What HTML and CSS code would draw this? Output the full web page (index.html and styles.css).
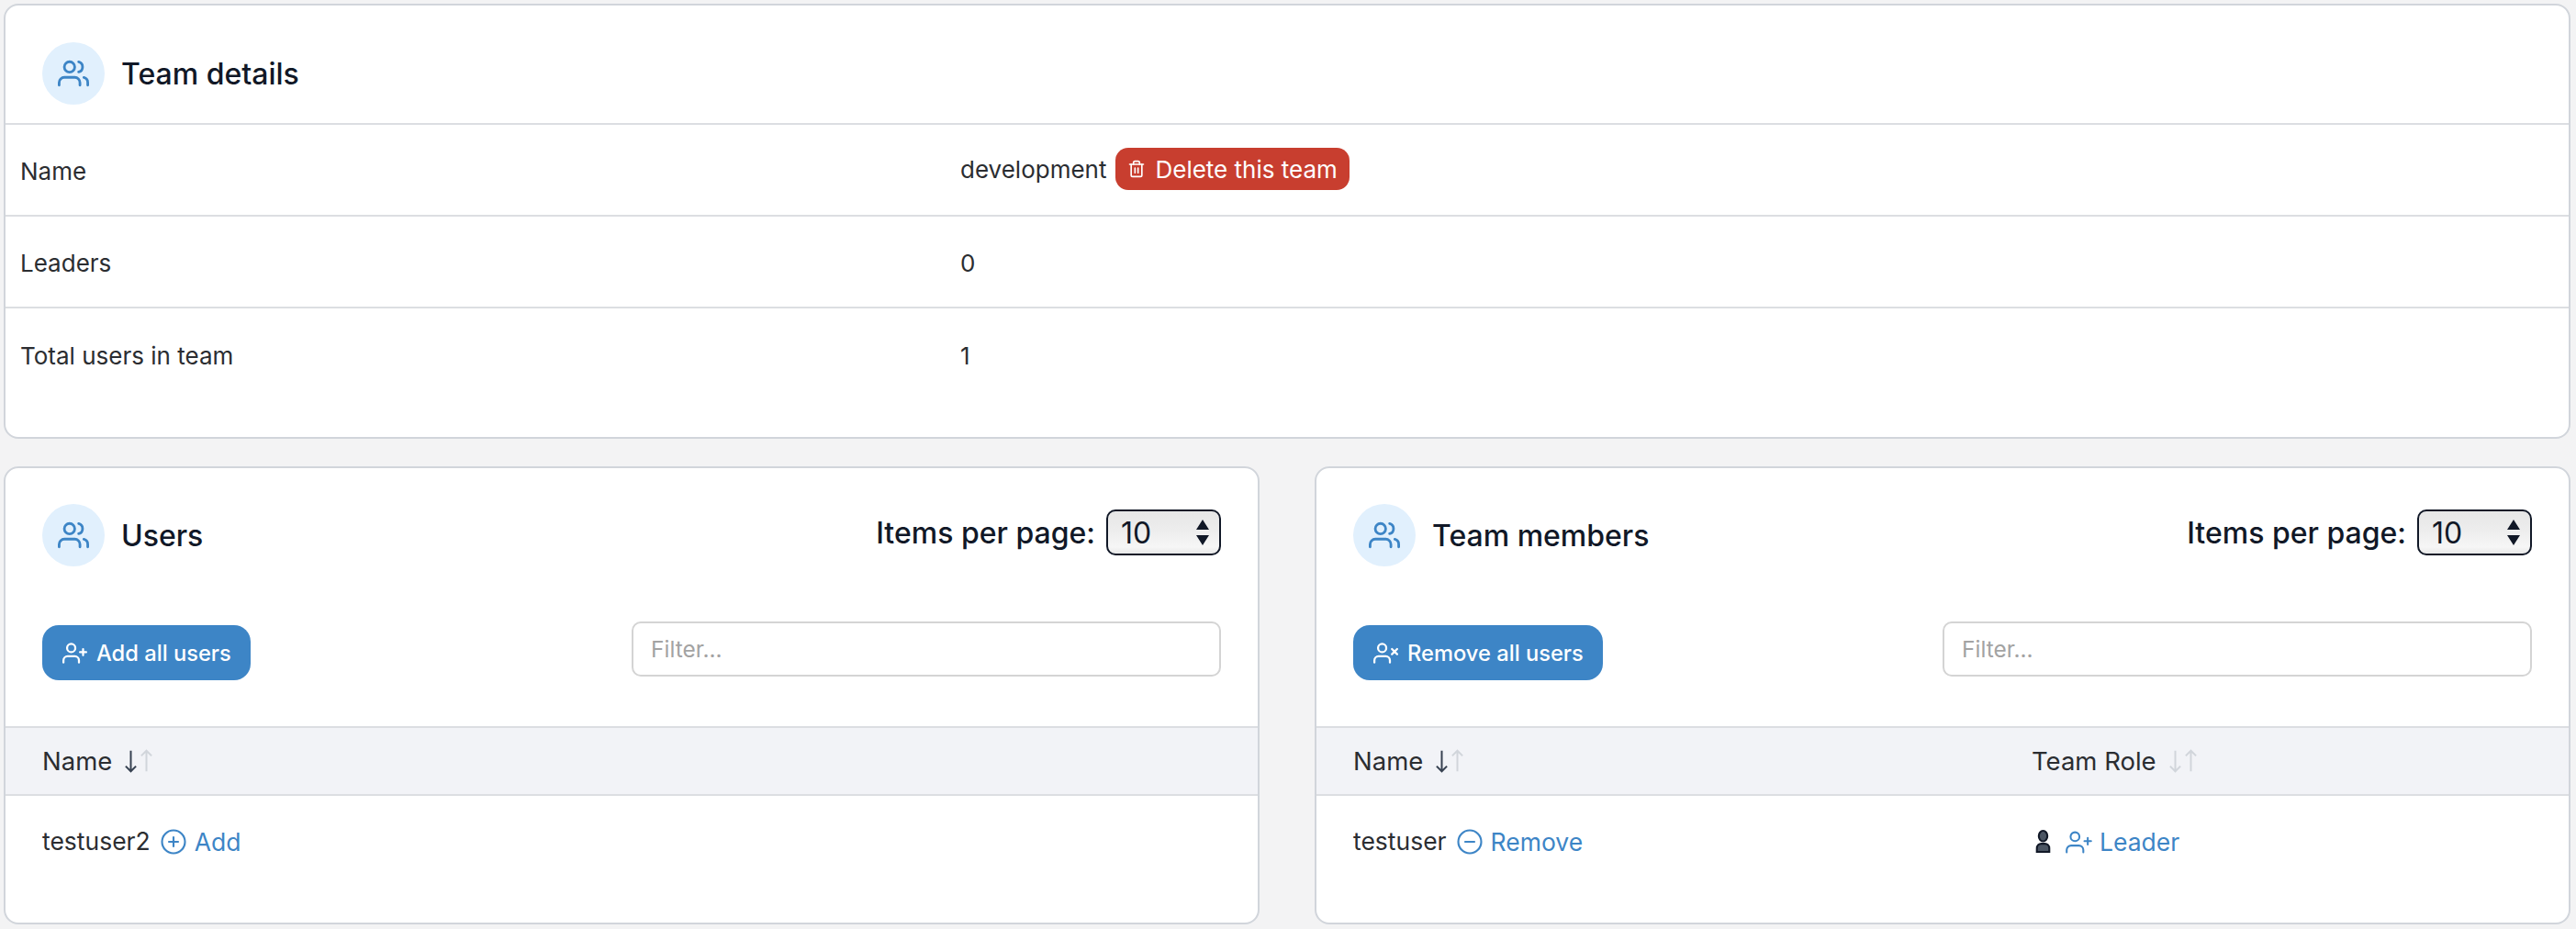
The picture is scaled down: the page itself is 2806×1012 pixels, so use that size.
FILE: index.html
```html
<!DOCTYPE html>
<html lang="en">
<head>
<meta charset="UTF-8">
<title>Team details</title>
<link rel="stylesheet" href="styles.css">
</head>
<body>
<svg class="sprite" xmlns="http://www.w3.org/2000/svg">
  <symbol id="i-users" viewBox="0 0 24 24"><path d="M17 21v-2a4 4 0 0 0-4-4H5a4 4 0 0 0-4 4v2"/><circle cx="9" cy="7" r="4"/><path d="M23 21v-2a4 4 0 0 0-3-3.87"/><path d="M16 3.13a4 4 0 0 1 0 7.75"/></symbol>
  <symbol id="i-user-plus" viewBox="0 0 24 24"><path d="M16 21v-2a4 4 0 0 0-4-4H5a4 4 0 0 0-4 4v2"/><circle cx="8.5" cy="7" r="4"/><path d="M20 8v6M23 11h-6"/></symbol>
  <symbol id="i-user-x" viewBox="0 0 24 24"><path d="M16 21v-2a4 4 0 0 0-4-4H5a4 4 0 0 0-4 4v2"/><circle cx="8.5" cy="7" r="4"/><path d="M18 8l5 5M23 8l-5 5"/></symbol>
  <symbol id="i-trash" viewBox="0 0 24 24"><path d="M3 6h18"/><path d="M19 6v14a2 2 0 0 1-2 2H7a2 2 0 0 1-2-2V6m3 0V4a2 2 0 0 1 2-2h4a2 2 0 0 1 2 2v2"/><path d="M10 11v6M14 11v6"/></symbol>
  <symbol id="i-plus" viewBox="0 0 24 24"><circle cx="12" cy="12" r="10"/><path d="M12 8v8M8 12h8"/></symbol>
  <symbol id="i-minus" viewBox="0 0 24 24"><circle cx="12" cy="12" r="10"/><path d="M8 12h8"/></symbol>
  <symbol id="i-down" viewBox="0 0 12 24"><path d="M6 3v18M1.5 16.500L6 21l4.500-4.500"/></symbol>
  <symbol id="i-up" viewBox="0 0 12 24"><path d="M6 21V3M1.500 7.500L6 3l4.500 4.500"/></symbol>
</svg>

<section class="card card-details">
  <header class="card-head-line">
    <span class="badge"><svg class="icon icon-badge"><use href="#i-users"/></svg></span>
    <h2 class="card-title">Team details</h2>
  </header>
  <div class="detail-row">
    <div>Name</div>
    <div class="detail-value">
      <span class="team-name">development</span>
      <a class="btn-delete"><svg class="icon icon-trash"><use href="#i-trash"/></svg>Delete this team</a>
    </div>
  </div>
  <div class="detail-row">
    <div>Leaders</div>
    <div>0</div>
  </div>
  <div class="detail-row detail-row-last">
    <div>Total users in team</div>
    <div>1</div>
  </div>
</section>

<div class="panels">
  <section class="card">
    <header class="card-head">
      <span class="badge"><svg class="icon icon-badge"><use href="#i-users"/></svg></span>
      <h2 class="card-title">Users</h2>
      <div class="per-page">
        <span>Items per page:</span>
        <div class="select-wrap">
          <select class="select"><option>10</option></select>
          <svg class="select-arrows" viewBox="0 0 14 28"><path d="M7 0l7 11H0zM7 28L0 17h14z"/></svg>
        </div>
      </div>
    </header>
    <div class="toolbar">
      <a class="btn-primary"><svg class="icon icon-btn"><use href="#i-user-plus"/></svg>Add all users</a>
      <input class="filter" type="text" placeholder="Filter...">
    </div>
    <div class="thead">
      <div class="th">Name <span class="sort"><svg class="arrow arrow-on"><use href="#i-down"/></svg><svg class="arrow"><use href="#i-up"/></svg></span></div>
    </div>
    <div class="tr">
      <div class="td">
        <span>testuser2</span>
        <a class="link"><svg class="icon icon-link"><use href="#i-plus"/></svg>Add</a>
      </div>
    </div>
  </section>

  <section class="card">
    <header class="card-head">
      <span class="badge"><svg class="icon icon-badge"><use href="#i-users"/></svg></span>
      <h2 class="card-title">Team members</h2>
      <div class="per-page">
        <span>Items per page:</span>
        <div class="select-wrap">
          <select class="select"><option>10</option></select>
          <svg class="select-arrows" viewBox="0 0 14 28"><path d="M7 0l7 11H0zM7 28L0 17h14z"/></svg>
        </div>
      </div>
    </header>
    <div class="toolbar">
      <a class="btn-primary"><svg class="icon icon-btn"><use href="#i-user-x"/></svg>Remove all users</a>
      <input class="filter" type="text" placeholder="Filter...">
    </div>
    <div class="thead thead-two">
      <div class="th">Name <span class="sort"><svg class="arrow arrow-on"><use href="#i-down"/></svg><svg class="arrow"><use href="#i-up"/></svg></span></div>
      <div class="th">Team Role <span class="sort"><svg class="arrow"><use href="#i-down"/></svg><svg class="arrow"><use href="#i-up"/></svg></span></div>
    </div>
    <div class="tr tr-two">
      <div class="td">
        <span>testuser</span>
        <a class="link"><svg class="icon icon-link"><use href="#i-minus"/></svg>Remove</a>
      </div>
      <div class="td">
        <svg class="icon-role" viewBox="0 0 16 24"><ellipse cx="8" cy="6.500" rx="4.500" ry="5.500"/><path d="M1.500 23v-3.500C1.500 16 4 14.500 6 14.500h4c2 0 4.500 1.500 4.500 5V23z"/></svg>
        <a class="link link-role"><svg class="icon icon-link"><use href="#i-user-plus"/></svg>Leader</a>
      </div>
    </div>
  </section>
</div>
</body>
</html>
```

FILE: styles.css
```css
* {
    box-sizing: border-box;
}

body {
    margin: 0;
    padding: 4px 6px 0 4px;
    background: #f3f3f4;
    color: #2b2d31;
    font-family: Inter, "Noto Sans", sans-serif;
    font-size: 26px;
}

.sprite {
    display: none;
}

.icon {
    fill: none;
    stroke: currentColor;
    stroke-width: 2;
    stroke-linecap: round;
    stroke-linejoin: round;
    flex: none;
}

.card {
    background: #fff;
    border: 2px solid #d1d5db;
    border-radius: 16px;
    overflow: hidden;
}

.card-details {
    height: 474px;
}

.card-head {
    display: flex;
    align-items: center;
    height: 146px;
    padding: 0 40px;
}

.card-head-line {
    display: flex;
    align-items: center;
    height: 130px;
    padding: 20px 40px 0;
    border-bottom: 2px solid #dcdee2;
}

.badge {
    display: flex;
    align-items: center;
    justify-content: center;
    width: 68px;
    height: 68px;
    border-radius: 50%;
    background: #e1f0fd;
    color: #3d85c6;
}

.icon-badge {
    width: 34px;
    height: 34px;
}

.card-title {
    margin: 0 0 0 18px;
    color: #111827;
    font-size: 32px;
    font-weight: 500;
}

.detail-row {
    display: grid;
    grid-template-columns: 1024px 1fr;
    align-items: center;
    height: 100px;
    padding: 2px 0 0 16px;
    border-bottom: 2px solid #dcdee2;
}

.detail-row-last {
    border-bottom: 0;
}

.detail-value {
    display: flex;
    align-items: center;
}

.team-name {
    margin-top: -4px;
}

.btn-delete {
    display: flex;
    align-items: center;
    height: 46px;
    margin: -4px 0 0 10px;
    padding: 0 13px;
    border-radius: 14px;
    background: #c83e2f;
    color: #fff;
}

.icon-trash {
    width: 20px;
    height: 20px;
    margin-right: 10px;
}

.panels {
    display: grid;
    grid-template-columns: 1368px 1368px;
    justify-content: space-between;
    margin-top: 30px;
}

.per-page {
    display: flex;
    align-items: center;
    margin: -6px 0 0 auto;
    color: #111827;
    font-size: 32px;
    font-weight: 500;
}

.select-wrap {
    position: relative;
    margin-left: 12px;
}

.select {
    display: block;
    width: 125px;
    height: 50px;
    padding: 0 0 0 14px;
    appearance: none;
    border: 2px solid #111827;
    border-radius: 10px;
    background: linear-gradient(#e6e6e6, #eee 50%, #f6f6f6 85%, #e8e8e8);
    color: #111827;
    font-family: inherit;
    font-size: 32px;
}

.select-arrows {
    position: absolute;
    top: 11px;
    right: 13px;
    width: 14px;
    height: 28px;
    fill: #111827;
}

.toolbar {
    display: flex;
    align-items: center;
    justify-content: space-between;
    height: 135px;
    padding: 0 40px 25px;
}

.btn-primary {
    display: flex;
    align-items: center;
    height: 60px;
    padding: 0 21px 0 22px;
    border-radius: 18px;
    background: #3d85c6;
    color: #fff;
    font-size: 23.700px;
    font-weight: 500;
}

.icon-btn {
    width: 27px;
    height: 27px;
    margin-right: 10px;
}

.filter {
    width: 642px;
    height: 60px;
    margin-bottom: 8px;
    padding: 0 19px;
    border: 2px solid #d4d4d4;
    border-radius: 10px;
    font-family: inherit;
    font-size: 24.500px;
}

.filter::placeholder {
    color: #a3a3a3;
}

.thead {
    display: grid;
    height: 76px;
    align-items: center;
    padding-left: 40px;
    background: #f2f3f7;
    border-top: 2px solid #dcdee2;
    border-bottom: 2px solid #dcdee2;
}

.thead-two,
.tr-two {
    grid-template-columns: 739px 1fr;
}

.th {
    display: flex;
    align-items: center;
    font-size: 27.500px;
}

.sort {
    display: flex;
    margin-left: 12px;
}

.arrow {
    width: 17px;
    height: 30px;
    fill: none;
    stroke: #d1d5db;
    stroke-width: 1.600;
}

.arrow-on {
    stroke: #374151;
}

.tr {
    display: grid;
    height: 138px;
    align-items: start;
    padding: 29px 40px 0;
}

.td {
    display: flex;
    align-items: center;
    height: 40px;
    font-size: 26.500px;
}

.link {
    display: flex;
    align-items: center;
    margin-left: 10px;
    color: #3d85c6;
    position: relative;
    top: 1px;
}

.link-role {
    margin-left: 15px;
}

.icon-link {
    width: 30px;
    height: 30px;
    margin-right: 8px;
    stroke-width: 1.700;
}

.link-role .icon-link {
    width: 29px;
    height: 29px;
}

.icon-role {
    width: 19px;
    height: 25px;
    margin-left: 3px;
    fill: #4b5563;
    stroke: #111827;
    stroke-width: 2;
}
```
